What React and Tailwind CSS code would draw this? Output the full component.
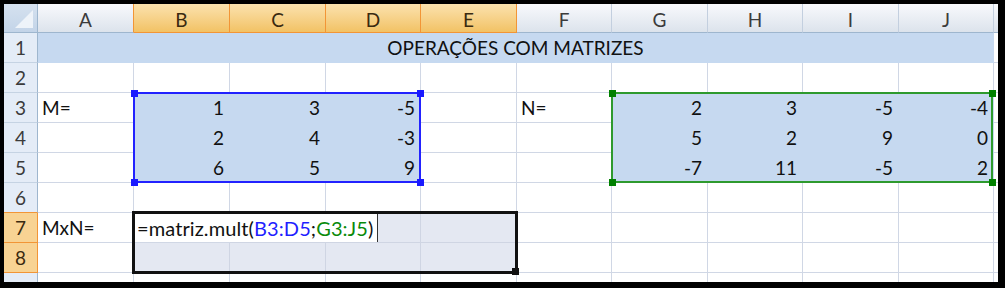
import React from "react";

const COLS = ["A", "B", "C", "D", "E", "F", "G", "H", "I", "J"];
const SELECTED_COLS = new Set(["B", "C", "D", "E"]);
const SELECTED_ROWS = new Set([7, 8]);

// cell values, keyed by row then column
const DATA = {
  3: { A: "M=", B: 1, C: 3, D: -5, F: "N=", G: 2, H: 3, I: -5, J: -4 },
  4: { B: 2, C: 4, D: -3, G: 5, H: 2, I: 9, J: 0 },
  5: { B: 6, C: 5, D: 9, G: -7, H: 11, I: -5, J: 2 },
  7: { A: "MxN=" },
};

const isMatrixCell = (r, c) =>
  r >= 3 && r <= 5 && (["B", "C", "D"].includes(c) || ["G", "H", "I", "J"].includes(c));

const isSelectionFill = (r, c) =>
  (r === 7 && ["C", "D", "E"].includes(c)) || (r === 8 && SELECTED_COLS.has(c));

function Corner() {
  return (
    <div className="relative border-r border-b border-[#9eb6ce] bg-gradient-to-b from-[#d5e1ef] to-[#c3d4e8]">
      <svg className="absolute inset-0" width="33" height="28" viewBox="0 0 33 28">
        <polygon points="29,6 29,24 11,24" fill="#eef3f9" />
      </svg>
    </div>
  );
}

function ColHeader({ label }) {
  const sel = SELECTED_COLS.has(label);
  const nextSel = label === "A";
  return (
    <div
      className={
        "flex items-center justify-center border-b text-[19px] leading-none " +
        (sel
          ? "bg-gradient-to-b from-[#fbe2ad] to-[#f2c264] border-b-[#f29536] border-r border-r-[#f29536] text-[#3a2a10]"
          : "bg-gradient-to-b from-[#f8f9fc] to-[#dce3ec] border-b-[#9eb6ce] border-r " +
            (nextSel ? "border-r-[#f29536]" : "border-r-[#c3cfdf]") +
            " text-[#3b3b3b]")
      }
    >
      <span className="pt-[2px]">{label}</span>
    </div>
  );
}

function RowHeader({ n }) {
  const sel = SELECTED_ROWS.has(n);
  const beforeSel = n === 6;
  return (
    <div
      className={
        "flex items-center justify-center border-r border-b text-[19px] leading-none " +
        (sel
          ? "bg-[#f8d393] border-r-[#f29536] border-b-[#f29536] text-[#3a2a10]"
          : "bg-[#e4ecf7] border-r-[#9eb6ce] text-[#3b3b3b] " +
            (beforeSel ? "border-b-[#f29536]" : "border-b-[#c5d3e3]"))
      }
    >
      {n}
    </div>
  );
}

function Cell({ r, c }) {
  const v = DATA[r] && DATA[r][c];
  const numeric = typeof v === "number";
  let cls = "flex items-end pb-[5px] border-r border-b text-[19px] leading-none text-[#111] overflow-visible whitespace-nowrap ";
  if (isMatrixCell(r, c)) cls += "bg-[#c6d9f0] border-[#c6d9f0] ";
  else if (isSelectionFill(r, c)) cls += "bg-[#e4e8f2] border-[#cfd5e3] ";
  else cls += "bg-white border-[#d0d7e5] ";
  cls += numeric ? "justify-end pr-[5px]" : "justify-start pl-[4px]";
  return <div className={cls}>{v === undefined ? "" : String(v)}</div>;
}

// range outline with its four corner handles
function RangeBox({ className, handle }) {
  const h = "absolute w-[7px] h-[7px] " + handle;
  return (
    <div className={"absolute border-2 " + className}>
      <div className={h + " -left-[4px] -top-[4px]"} />
      <div className={h + " -right-[5px] -top-[4px]"} />
      <div className={h + " -left-[4px] -bottom-[5px]"} />
      <div className={h + " -right-[5px] -bottom-[5px]"} />
    </div>
  );
}

export default function App() {
  const rows = [1, 2, 3, 4, 5, 6, 7, 8];
  return (
    <div className="w-[1005px] h-[288px] bg-black pt-[4px] pl-[4px] pr-[7px] pb-[6px] font-[family-name:Lato,'Liberation_Sans',sans-serif]">
      <div className="relative w-[994px] h-[278px] overflow-hidden bg-white">
        <div className="grid grid-cols-[34px_96px_96px_96px_95px_96px_95px_96px_95px_96px_95px_4px] grid-rows-[29px_repeat(8,30px)_9px]">
          {/* column headers */}
          <Corner />
          {COLS.map((c) => (
            <ColHeader key={c} label={c} />
          ))}
          <div className="border-b border-[#9eb6ce] bg-gradient-to-b from-[#f8f9fc] to-[#dce3ec]" />

          {rows.map((r) => (
            <React.Fragment key={r}>
              <RowHeader n={r} />
              {r === 1 ? (
                <div className="col-span-10 flex items-end justify-center pb-[5px] bg-[#c6d9f0] border-b border-r border-[#c6d9f0] text-[19px] leading-none text-[#111]">
                  OPERAÇÕES COM MATRIZES
                </div>
              ) : (
                COLS.map((c) => <Cell key={c} r={r} c={c} />)
              )}
              <div className="border-b border-[#d0d7e5] bg-white" />
            </React.Fragment>
          ))}

          {/* partially visible row 9 */}
          <div className="border-r border-[#9eb6ce] bg-[#e4ecf7]" />
          {COLS.map((c) => (
            <div key={c} className="border-r border-[#d0d7e5] bg-white" />
          ))}
          <div className="bg-white" />
        </div>

        {/* formula references: B3:D5 and G3:J5 */}
        <RangeBox className="left-[129px] top-[88px] w-[288px] h-[91px] border-[#2222ff]" handle="bg-[#1a1aff]" />
        <RangeBox className="left-[607px] top-[88px] w-[382px] h-[91px] border-[#2e9a2e]" handle="bg-[#008000]" />

        {/* selection B7:E8 with fill handle */}
        <div className="absolute left-[128px] top-[207px] w-[386px] h-[63px] border-[3px] border-[#111]">
          <div className="absolute -right-[4px] -bottom-[4px] w-[7px] h-[7px] bg-[#111]" />
          {/* in-cell editor */}
          <div className="absolute left-0 top-0 w-[243px] h-[28px] bg-white border-r border-[#333] flex items-end pb-[4px] pl-[2px] text-[20px] leading-none text-[#111] whitespace-nowrap tracking-[0.1px]">
            <span>=matriz.mult(</span>
            <span className="text-[#1f1fff]">B3:D5</span>
            <span>;</span>
            <span className="text-[#0a8a0a]">G3:J5</span>
            <span>)</span>
          </div>
        </div>
      </div>
    </div>
  );
}
